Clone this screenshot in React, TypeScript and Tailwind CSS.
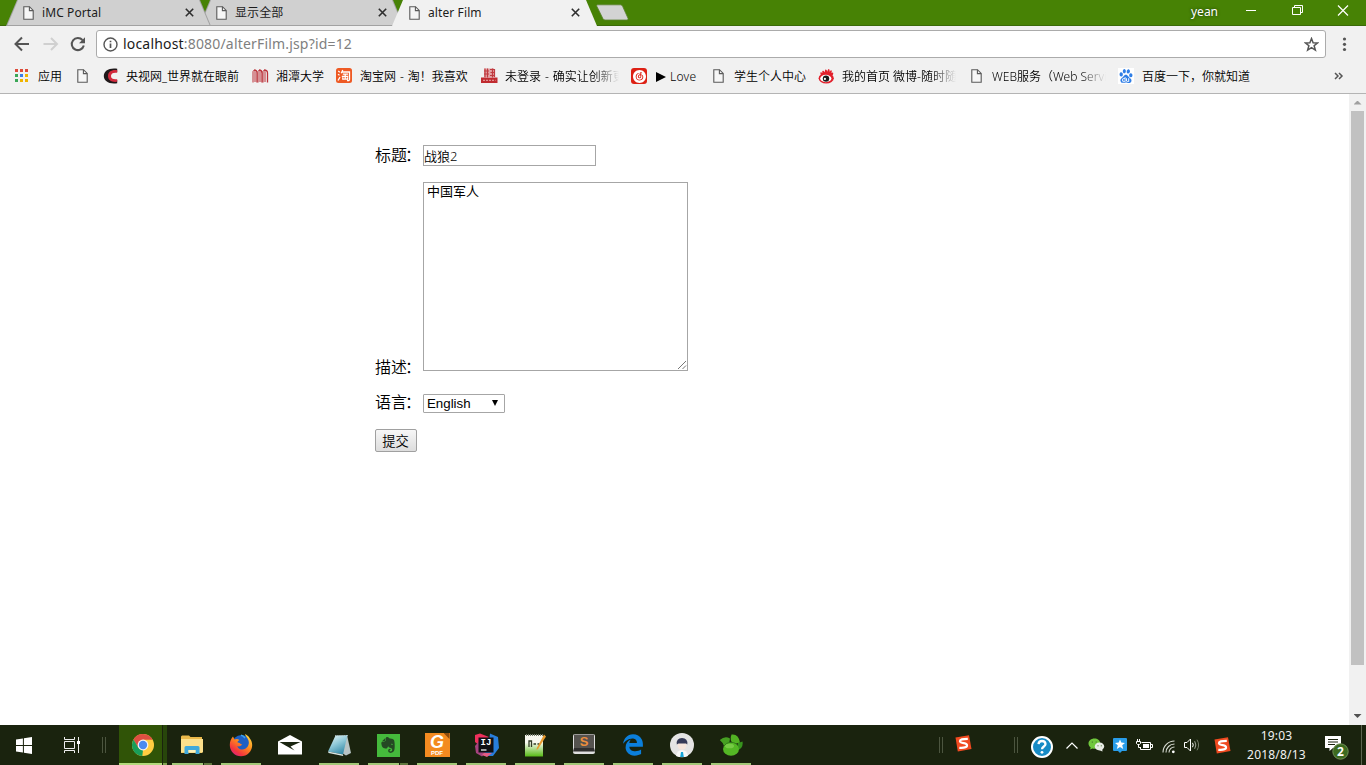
import React from "react";
import { FaEdgeLegacy, FaEvernote } from "react-icons/fa6";
import { SiBaidu, SiNeteasecloudmusic } from "react-icons/si";

type IconProps = { className?: string };

const DocIcon = ({ className = "" }: IconProps) => (
  <svg className={`shrink-0 ${className}`} width="11" height="14" viewBox="0 0 11 14" fill="#fff" stroke="#5a5a5a" strokeWidth="1.1">
    <path d="M.8 .7H6.5L10.2 4.4V13.3H.8Z" fill="#f6f6f6" />
    <path d="M6.4 .8V4.6H10.1" fill="none" />
  </svg>
);

const CloseIcon = () => (
  <svg width="9" height="9" viewBox="0 0 9 9" stroke="#2e2e2e" strokeWidth="1.6" className="shrink-0">
    <path d="M.8 .8 8.2 8.2M8.2 .8 .8 8.2" />
  </svg>
);

function Tab({ title, active = false, z }: { title: string; active?: boolean; z: string }) {
  return (
    <div className={`relative -mr-[12px] h-[26px] w-[205px] shrink-0 ${z}`}>
      <div
        className={`absolute inset-0 [clip-path:polygon(11px_0,194px_0,205px_100%,0_100%)] ${active ? "bg-[#f1f1f1]" : "bg-[#a2a2a2]"}`}
      />
      {!active && (
        <div className="absolute inset-x-0 top-0 h-[25px] bg-[#d0d0d0] [clip-path:polygon(12px_0,193px_0,203.5px_100%,1.5px_100%)]" />
      )}
      <div className="relative flex h-[25px] items-center pl-[17px] pr-[17px]">
        <DocIcon />
        <span className="ml-[8px] flex-1 whitespace-nowrap text-[12px] leading-[24px] tracking-[0.1px] text-[#1c1c1c]">{title}</span>
        <CloseIcon />
      </div>
    </div>
  );
}

const AppsIcon = () => (
  <svg width="14" height="14" viewBox="0 0 14 14" className="shrink-0">
    <path fill="#dd4b39" d="M0 0h3v3H0zM5 0h3v3H5zM10 0h3v3h-3z" />
    <path fill="#3aa757" d="M0 5h3v3H0z" />
    <path fill="#3b7de8" d="M5 5h3v3H5z" />
    <path fill="#f0b400" d="M10 5h3v3h-3zM5 10h3v3H5zM10 10h3v3h-3z" />
    <path fill="#3aa757" d="M0 10h3v3H0z" />
  </svg>
);

const CctvIcon = () => (
  <svg width="15" height="16" viewBox="0 0 15 16" className="shrink-0">
    <path d="M14.2 .8C6 -.4 .8 3 .8 8S6 16.4 14.2 15.2V12C9.8 12.8 6.5 11.4 6.3 8 6.5 4.6 9.8 3.2 14.2 4Z" fill="#20181a" />
    <path d="M14.2 2.2C8.5 1.5 5 3.9 5 8s3.500 6.500 9.200 5.800V11.200C10.200 11.700 8 10.500 8 8s2.200-3.700 6.200-3.200Z" fill="#d22a3d" />
  </svg>
);

const XtuIcon = () => (
  <svg width="17" height="14" viewBox="0 0 17 14" className="shrink-0" fill="none" stroke="#bb3038">
    <path d="M1 13.500V3C1 .8 3 .8 3 3V13M6 13.500V3C6 .8 8 .8 8 3V13M11 13.500V3C11 .8 13 .8 13 3V13" strokeWidth="1" />
    <path d="M2 1C4.500 1 5 2 5 4V13.500M7 1C9.500 1 10 2 10 4V13.500M12 1C14.700 1 15.500 2 15.500 4V13.500" strokeWidth="1.300" />
  </svg>
);

const TaobaoIcon = () => (
  <svg width="16" height="16" viewBox="0 0 16 16" className="shrink-0">
    <rect width="16" height="15" rx="2.500" fill="#ee5a24" />
    <g fill="none" stroke="#fff" strokeWidth="1.300">
      <path d="M2.200 3l1.600 1.200M2 6.200l1.500 1M2 12.500 4 9.200M6.800 2 5.200 5.200M6.200 4H13.500V11.500C13.500 12.800 12.500 12.700 11 12.500M6.800 6.200H12M5.800 8.300H12.200M9.200 6.200V11M6.800 9.300V11.200H11.500V9.300" />
    </g>
  </svg>
);

const RedSealIcon = () => (
  <svg width="17" height="16" viewBox="0 0 17 16" className="shrink-0">
    <path d="M0 9.500h16.500V15H0z" fill="#c02b30" />
    <path d="M3 .5h10v9H3z" fill="#e3a3a5" />
    <path d="M4 .5v9M3 3h5M3 6h5M6.500 .5v9M9 1.500h5M9.500 4.500h4M9 7.500h5M11.500 .5v9M13.500 1v8" stroke="#c03b40" strokeWidth="1.200" fill="none" />
    <path d="M2 12.300h12.500" stroke="#e9aaac" strokeDasharray="2 1" />
  </svg>
);

const NeteaseIcon = () => (
  <span className="flex size-[16px] shrink-0 items-center justify-center rounded-[3px] bg-[#dd2014] text-white">
    <SiNeteasecloudmusic size={13} />
  </span>
);

const WeiboIcon = () => (
  <svg width="17" height="16" viewBox="0 0 17 16" className="shrink-0">
    <path d="M3 7C1.500 4.500 2.500 3.500 4.500 5 3.500 2 5.500 2 7 4.300 6.500 .5 8.500 .5 9.300 3.800 10 -.3 12 .3 11.600 4 13 1.200 14.500 2.200 13.400 5 15.500 3.500 15.800 5.500 14.500 7.500L10 8Z" fill="#e2202c" />
    <ellipse cx="8.200" cy="10.300" rx="7.600" ry="5.200" fill="#e2202c" />
    <ellipse cx="7.800" cy="10.500" rx="5.600" ry="3.700" fill="#fff" />
    <circle cx="8" cy="10.600" r="3.200" fill="#1b1b1b" />
    <circle cx="6.900" cy="10.900" r="1.100" fill="#fff" />
  </svg>
);

const BaiduIcon = () => (
  <span className="flex size-[16px] shrink-0 items-center justify-center bg-white text-[#2f7ee6]">
    <SiBaidu size={14} />
  </span>
);

type Bookmark = { label?: string; icon: React.ReactNode; cell: string; gap?: string; fade?: boolean };

const bookmarks: Bookmark[] = [
  { label: "应用", icon: <AppsIcon />, cell: "w-[62px]", gap: "w-[23px]" },
  { icon: <DocIcon />, cell: "w-[26px]" },
  { label: "央视网_世界就在眼前", icon: <CctvIcon />, cell: "w-[149px]", gap: "w-[23px]" },
  { label: "湘潭大学", icon: <XtuIcon />, cell: "w-[84px]", gap: "w-[24px]" },
  { label: "淘宝网 - 淘！我喜欢", icon: <TaobaoIcon />, cell: "w-[145px]", gap: "w-[24px]" },
  { label: "未登录 - 确实让创新更", icon: <RedSealIcon />, cell: "w-[150px]", gap: "w-[24px]", fade: true },
  { label: "▶ Love", icon: <NeteaseIcon />, cell: "w-[82px]", gap: "w-[25px]" },
  { label: "学生个人中心", icon: <DocIcon />, cell: "w-[105px]", gap: "w-[21px]" },
  { label: "我的首页 微博-随时随地", icon: <WeiboIcon />, cell: "w-[153px]", gap: "w-[24px]", fade: true },
  { label: "WEB服务（Web Services", icon: <DocIcon />, cell: "w-[147px]", gap: "w-[21px]", fade: true },
  { label: "百度一下，你就知道", icon: <BaiduIcon />, cell: "w-[160px]", gap: "w-[24px]" },
];

function BookmarkLabel({ label, fade }: { label: string; fade?: boolean }) {
  if (label === "▶ Love")
    return (
      <span className="flex items-center gap-[4px] pt-[2px] text-[12px] text-black">
        <span className="h-[10px] w-[10px] bg-black [clip-path:polygon(0_0,100%_50%,0_100%)]" />
        <span className="tracking-[0.3px]">Love</span>
      </span>
    );
  return (
    <span
      className={`overflow-hidden whitespace-nowrap pt-[2px] text-[12px] text-black ${
        label.includes(" - ") ? "[word-spacing:0.8px]" : ""
      } ${fade ? "w-[114px] [mask-image:linear-gradient(to_right,#000_78%,transparent)]" : ""}`}
    >
      {label}
    </span>
  );
}

function Browser() {
  return (
    <header className="shrink-0">
      <div className="flex h-[26px] justify-between bg-[#478205] shadow-[inset_0_-1px_0_#3a6a08]">
        <div className="flex pl-[6px]">
          <Tab title="iMC Portal" z="z-20" />
          <Tab title="显示全部" z="z-10" />
          <Tab title="alter Film" z="z-30" active />
          <svg width="34" height="17" viewBox="0 0 34 17" className="ml-[11px] mt-[4px]">
            <path d="M1.500 .8H24.500Q26 .8 26.600 2.300L32 14.300Q32.600 16 31 16H9Q7.500 16 6.900 14.600L.8 2.200Q.2 .8 1.500 .8Z" fill="#d3d3d3" stroke="#5a8230" strokeWidth=".8" />
          </svg>
        </div>
        <div className="flex w-[176px] text-white">
          <span className="w-[56px] pl-[1px] pt-[4px] text-[12px] leading-[16px] [text-shadow:0_0_3px_#17300a]">yean</span>
          <svg width="110" height="20" viewBox="0 0 110 20" fill="none" stroke="#fff">
            <path d="M0 10.500H10" />
            <path d="M46.500 7.500H54.500V14.500H46.500ZM48.500 7.500V5.500H56.500V12.500H54.500" />
            <path d="M92 5.500 102 15.500M102 5.500 92 15.500" strokeWidth="1.200" />
          </svg>
        </div>
      </div>

      <div className="flex h-[36px] items-center bg-[#f1f1f1]">
        <svg width="96" height="36" viewBox="0 0 96 36" fill="none" stroke="#555" strokeWidth="2">
          <path d="M29 18H16M22 11.500 15.500 18 22 24.500" />
          <path d="M43.500 18H57M51 12 57 18 51 24" stroke="#d0d0d0" />
          <path d="M82.500 14A6.100 6.100 0 1 0 83.800 19.500" />
          <path d="M85 11.200V17.200H79Z" fill="#555" stroke="none" />
        </svg>
        <div className="flex h-[28px] w-[1230px] items-center rounded-[3px] border border-[#ababab] bg-white pl-[6px] pr-[6px]">
          <svg width="15" height="15" viewBox="0 0 15 15" fill="none" stroke="#555" strokeWidth="1.400">
            <circle cx="7.500" cy="7.500" r="6.500" />
            <path d="M7.500 6.500V11M7.500 3.700V5.300" strokeWidth="1.700" />
          </svg>
          <span className="ml-[5px] flex-1 whitespace-nowrap text-[14px] leading-[20px] tracking-[0.180px] text-[#808080]">
            <span className="text-[#1a1a1a]">localhost</span>:8080/alterFilm.jsp?id=12
          </span>
          <svg width="15" height="15" viewBox="0 0 16 16" fill="none" stroke="#555" strokeWidth="1.600">
            <path d="M8 1.700 9.700 6.100 14.500 6.300 10.800 9.300 12.100 14 8 11.300 3.900 14 5.200 9.300 1.500 6.300 6.300 6.100Z" />
          </svg>
        </div>
        <svg width="40" height="36" viewBox="0 0 40 36" fill="#555">
          <circle cx="18.500" cy="13" r="1.600" />
          <circle cx="18.500" cy="18.300" r="1.600" />
          <circle cx="18.500" cy="23.500" r="1.600" />
        </svg>
      </div>

      <div className="flex h-[32px] items-center border-b border-[#b4b4b4] bg-[#f1f1f1] pb-[3px] pl-[15px] font-[350]">
        {bookmarks.map((b, i) => (
          <div key={i} className={`flex shrink-0 items-center ${b.cell}`}>
            <span className={`flex shrink-0 ${b.gap ?? ""}`}>{b.icon}</span>
            {b.label && <BookmarkLabel label={b.label} fade={b.fade} />}
          </div>
        ))}
        <svg width="10" height="8" viewBox="0 0 10 8" className="ml-[56px]" fill="none" stroke="#555" strokeWidth="1.500">
          <path d="M1 1 4 4 1 7M5 1 8 4 5 7" />
        </svg>
      </div>
    </header>
  );
}

function Label({ children }: { children: string }) {
  return (
    <label className="flex w-[48px] shrink-0 whitespace-nowrap text-[16px] font-[350] leading-[20px] text-black">
      <span>{children}</span>
      <span className="-ml-[2px]">：</span>
    </label>
  );
}

function Page() {
  return (
    <main className="flex min-h-0 flex-1 bg-white">
      <form className="flex flex-1 flex-col items-start pl-[375px] pt-[51px]">
        <div className="flex h-[21px] items-start">
          <Label>标题</Label>
          <input className="h-[21px] w-[173px] border border-[#a6a6a6] bg-white px-0 text-[13px] font-[350] text-black" defaultValue="战狼2" />
        </div>
        <div className="relative mt-[16px] flex items-end">
          <div className="-mb-[6px]">
            <Label>描述</Label>
          </div>
          <textarea
            className="block h-[189px] w-[265px] resize-none border border-[#a6a6a6] bg-white px-[3px] py-0 text-[13px] leading-[17px] text-black"
            defaultValue="中国军人"
          />
          <svg width="10" height="10" viewBox="0 0 10 10" className="absolute bottom-[1px] right-[1px]" stroke="#777" fill="none">
            <path d="M1 9 9 1M5.500 9 9 5.500" />
          </svg>
        </div>
        <div className="relative mt-[23px] flex h-[19px] items-end">
          <div className="mb-px">
            <Label>语言</Label>
          </div>
          <select className="h-[19px] w-[82px] appearance-none rounded-[1px] border border-[#a6a6a6] bg-white pl-[3px] font-['Liberation_Sans',Arial,sans-serif] text-[13.3px] leading-[17px] text-black">
            <option>English</option>
          </select>
          <span className="absolute right-[7px] top-[6px] h-[6px] w-[6px] bg-black [clip-path:polygon(0_0,100%_0,50%_100%)]" />
        </div>
        <button
          type="button"
          className="mt-[16px] h-[23px] w-[42px] whitespace-nowrap rounded-[2px] border border-[#a0a0a0] bg-linear-to-b from-[#f7f7f7] to-[#dddddd] pr-[1px] text-[13.3px] font-[350] leading-[20px] text-black"
        >
          提交
        </button>
      </form>
      <div className="flex w-[17px] flex-col items-center bg-[#f1f1f1]">
        <div className="flex h-[17px] items-center">
          <span className="h-[4px] w-[8px] bg-[#a0a0a0] [clip-path:polygon(50%_0,100%_100%,0_100%)]" />
        </div>
        <div className="h-[554px] w-[13px] bg-[#c1c1c1]" />
        <div className="mt-auto flex h-[18px] items-center">
          <span className="h-[4px] w-[8px] bg-[#505050] [clip-path:polygon(0_0,100%_0,50%_100%)]" />
        </div>
      </div>
    </main>
  );
}

const ChromeIcon = () => (
  <svg width="24" height="24" viewBox="0 0 24 24" className="mt-[2px]">
    <circle cx="12" cy="12" r="11" fill="#ffcd41" />
    <path d="M12 12 7.200 14.700 2.500 6.400A11 11 0 0 1 21.700 6.700H12Z" fill="#dd4f42" />
    <path d="M2.500 6.400 7.400 14.800 12 17.200 11.300 23A11 11 0 0 1 2.500 6.400Z" fill="#199e59" />
    <circle cx="12" cy="12" r="5.400" fill="#f4f4f4" />
    <circle cx="12" cy="12" r="4.200" fill="#4a8bf0" />
  </svg>
);

const FolderIcon = () => (
  <svg width="24" height="22" viewBox="0 0 24 22">
    <path d="M1 2.500 2 1.500H9L10.500 3H22V19H1Z" fill="#e9b94b" />
    <path d="M1 5H23V18.500H1Z" fill="#fbe08c" />
    <path d="M4.500 20V13.500Q4.500 12 6 12H18Q19.500 12 19.500 13.500V20H15.500V16H8.500V20Z" fill="#3fa9dc" />
    <path d="M8.500 16h7v2.500h-7z" fill="#fdf0b9" />
  </svg>
);

const FirefoxIcon = () => (
  <svg width="24" height="24" viewBox="0 0 24 24">
    <defs>
      <linearGradient id="fox" x1=".9" y1="0" x2=".2" y2="1">
        <stop offset="0" stopColor="#ffe34a" />
        <stop offset=".45" stopColor="#ff8b1c" />
        <stop offset=".8" stopColor="#f3363d" />
        <stop offset="1" stopColor="#d92287" />
      </linearGradient>
    </defs>
    <circle cx="12.500" cy="11.500" r="9.500" fill="#1d5fc4" />
    <path d="M16 1C16.500 3.500 18.500 4.500 19.500 7.500 21 12 17.500 16.500 13.500 16.500 10 16.500 8.500 14.500 8.500 13 10 14 12 13 13.200 11.500 11.500 11.500 11 9.500 8.500 9.500 8.500 8 9.500 7.500 10.500 7 8.500 5.500 6.500 6 5.500 6.500L4 3.500C2 5.500 .8 8.500.8 12A11.200 11.200 0 0 0 23.200 12C23.200 9 22 6.800 20.500 5 20 3 17.500 2 16 1Z" fill="url(#fox)" />
    <path d="M12 2.200C14.500 2.500 15 4 16 5" stroke="#3aa4ee" strokeWidth="1.500" fill="none" />
  </svg>
);

const MailIcon = () => (
  <svg width="26" height="22" viewBox="0 0 26 22">
    <path d="M1 7.500 13 1 25 7.500V20.500H1Z" fill="#fff" />
    <path d="M2.500 8H23.500L13.500 12.500 17.500 16.500 8.500 11.500Z" fill="#1a2410" />
  </svg>
);

const NotepadIcon = () => (
  <svg width="25" height="24" viewBox="0 0 25 24">
    <defs>
      <linearGradient id="note" x1=".2" y1="0" x2=".7" y2="1">
        <stop offset="0" stopColor="#e2f3f3" />
        <stop offset=".45" stopColor="#8fc9d8" />
        <stop offset="1" stopColor="#2f86a4" />
      </linearGradient>
    </defs>
    <path d="M20 2 24 20 19 22.500 15 20Z" fill="#b7c4c5" />
    <path d="M8.500 2.500 20.500 2 16 21.500 1 18.500Z" fill="url(#note)" />
    <path d="M1 18.500 16 21.500 16.200 23 1.500 20Z" fill="#dbe6e3" />
    <path d="M8 2.500h13" stroke="#9ba9a7" strokeDasharray="1 1" />
  </svg>
);

const EvernoteIcon = () => (
  <span className="flex size-[23px] items-center justify-center bg-[#45ba3c] text-[#254824]">
    <FaEvernote size={18} />
  </span>
);

const FoxitIcon = () => (
  <span className="relative flex h-[24px] w-[25px] flex-col items-center bg-[#f38b20] font-['Liberation_Sans',sans-serif] font-bold text-white">
    <span className="mt-[1px] text-[18px] italic leading-[17px]">G</span>
    <span className="text-[6px] leading-[5px]">PDF</span>
    <span className="absolute right-0 top-0 size-[6px] bg-[#8f4c0c] [clip-path:polygon(0_0,100%_0,100%_100%)]" />
  </span>
);

const IdeaIcon = () => (
  <span className="relative flex size-[24px] items-center justify-center">
    <svg width="25" height="24" viewBox="0 0 25 24" className="absolute inset-0">
      <path d="M1 2 6 .5 15 4 6 13 1 9Z" fill="#ef315c" />
      <path d="M1 13 6 7 13 19 8 23.500 2 20Z" fill="#a7437f" />
      <path d="M16 .5 24 4 25 15 19 23 10 23 15 9Z" fill="#287edb" />
      <path d="M10 20 18 20 13 24 8 22Z" fill="#e65d85" />
      <path d="M4.500 4.500h15v15h-15z" fill="#101014" />
      <path d="M7 17h5.500" stroke="#fff" strokeWidth="1.200" />
    </svg>
    <span className="relative -top-[2px] font-['Liberation_Mono',monospace] text-[9px] font-bold leading-[9px] text-white">IJ</span>
  </span>
);

const NppIcon = () => (
  <svg width="22" height="25" viewBox="0 0 22 25">
    <defs>
      <linearGradient id="npp" x1="0" y1="0" x2="0" y2="1">
        <stop offset=".35" stopColor="#f7f8ef" />
        <stop offset="1" stopColor="#57ba15" />
      </linearGradient>
    </defs>
    <path d="M1 2H19V23.500H1Z" fill="url(#npp)" />
    <path d="M2 2h17" stroke="#788070" strokeWidth="2" strokeDasharray="1 1" />
    <path d="M5 14V8H7.500V14M9.500 11H12M13.500 11H15.500" stroke="#303a25" strokeWidth="1.300" fill="none" />
    <path d="M20 1.500 22 3.500 14 16 12.500 17 12.800 15Z" fill="#e99c31" />
  </svg>
);

const SublimeIcon = () => (
  <span className="relative -top-[1px] flex h-[22px] w-[24px] items-start justify-center">
    <svg width="24" height="22" viewBox="0 0 24 22" className="absolute inset-0">
      <rect x="1" y="1" width="22" height="20" rx="2" fill="#dedede" />
      <path d="M2 1.500H22V15H2Z" fill="#55534f" />
      <path d="M2 15 22 15 23 18.500H1Z" fill="#302f2e" />
    </svg>
    <span className="relative font-['Liberation_Sans',sans-serif] text-[13px] font-bold leading-[17px] text-[#ed8e3c]">S</span>
  </span>
);

const AvatarIcon = () => (
  <svg width="26" height="26" viewBox="0 0 26 26">
    <circle cx="13" cy="13" r="12" fill="#e4e4e4" />
    <path d="M7 24Q8 18 13 18T19 24Q13 26.500 7 24Z" fill="#f8f8f8" />
    <ellipse cx="13" cy="13" rx="4.500" ry="4.800" fill="#f6e5db" />
    <path d="M7.800 12.500Q7 6 13 6T18.300 12.500L17 11.500 9.500 11.500Z" fill="#353a57" />
    <path d="M12 20h2l.8 5h-3.600z" fill="#16a5d8" />
  </svg>
);

const NavicatIcon = () => (
  <svg width="24" height="24" viewBox="0 0 24 24">
    <path d="M.8 7Q6 2.500 11 5.500L10 11.500 5 13Q3.500 9 .8 7Z" fill="#469f22" />
    <path d="M12.500 1.500Q19.500 .5 21 9.500L14.500 11.500Q10 7 12.500 1.500Z" fill="#52b223" />
    <path d="M19 10 23.500 8.500Q24.500 15 19 17Z" fill="#37931d" />
    <ellipse cx="12" cy="16" rx="8" ry="6.800" fill="#54b725" />
    <ellipse cx="10.500" cy="13" rx="4.500" ry="2.300" fill="#8fd75b" opacity=".6" />
    <path d="M4.500 13.500Q10 6 18.500 11.500" stroke="#2b6f16" strokeWidth=".8" fill="none" />
  </svg>
);

const taskIcons: { icon: React.ReactNode; bar?: string }[] = [
  { icon: <FolderIcon />, bar: "stack" },
  { icon: <FirefoxIcon />, bar: "full" },
  { icon: <MailIcon /> },
  { icon: <NotepadIcon />, bar: "full" },
  { icon: <EvernoteIcon />, bar: "stack" },
  { icon: <FoxitIcon />, bar: "full" },
  { icon: <IdeaIcon />, bar: "full" },
  { icon: <NppIcon />, bar: "full" },
  { icon: <SublimeIcon />, bar: "full" },
  { icon: <FaEdgeLegacy size={22} color="#0b7fdc" />, bar: "full" },
  { icon: <AvatarIcon />, bar: "full" },
  { icon: <NavicatIcon />, bar: "full" },
];

const SogouIcon = () => (
  <svg width="17" height="17" viewBox="0 0 17 17" className="shrink-0">
    <path d="M.5 2.500 14 .3 16.500 14 2.800 16.500Z" fill="#f04a20" />
    <path d="M12.800 3.800Q4.800 3.800 5 6.200 5.400 7.600 8.800 8.200 12.400 8.900 12 10.900 11.300 13.200 4.300 12.800" fill="none" stroke="#fff" strokeWidth="2.300" />
  </svg>
);

const Grip = () => <span className="h-[16px] w-[4px] border-x border-[#4c553f]" />;

function Taskbar() {
  return (
    <footer className="flex h-[40px] shrink-0 bg-[#1a230e]">
      <div className="flex w-[119px] items-center">
        <svg width="17" height="17" viewBox="0 0 17 17" className="ml-[16px]" fill="#fff">
          <path d="M0 2.400 6.900 1.400V8H0ZM7.900 1.300 16 .1V8H7.900ZM0 9H6.900V15.600L0 14.600ZM7.900 9H16V16.900L7.900 15.700Z" />
        </svg>
        <svg width="17" height="16" viewBox="0 0 17 16" className="ml-[31px]" fill="none" stroke="#eee">
          <path d="M.5 0V2.500H10.500V0M.5 16V13.500H10.500V16M.5 4.500H10.500V11.500H.5ZM14.500 0V16" />
          <path d="M13 4h3v3h-3z" fill="#fff" stroke="none" />
        </svg>
        <span className="ml-[21px] flex">
          <Grip />
        </span>
      </div>
      <div className="flex w-[49px]">
        <div className="flex h-[40px] w-[43px] items-center justify-center border-b-2 border-[#b2da7c] bg-[#305407] pl-[5px]">
          <ChromeIcon />
        </div>
        <div className="ml-px h-[40px] w-[4px] border-b-2 border-[#80a352] bg-[#28460b]" />
      </div>
      {taskIcons.map((t, i) => (
        <div key={i} className="flex w-[49px] flex-col">
          <div className="flex h-[38px] w-[48px] items-center justify-center pt-[2px]">{t.icon}</div>
          {t.bar && (
            <div className="ml-[4px] flex h-[2px] w-[40px] bg-[#a2c878]">
              {t.bar === "stack" && <span className="ml-auto w-[9px] border-l border-[#1a230e] bg-[#61793f]" />}
            </div>
          )}
        </div>
      ))}
      <div className="ml-auto flex w-[427px] items-center">
        <Grip />
        <span className="-mt-[3px] ml-[12px]">
          <SogouIcon />
        </span>
        <span className="ml-[42px] flex">
          <Grip />
        </span>
        <svg width="24" height="24" viewBox="0 0 24 24" className="ml-[12px] mt-[3px]">
          <circle cx="12" cy="12" r="10" fill="#178bc5" stroke="#fff" strokeWidth="2" />
          <path d="M8.500 9.200Q8.800 6 12 6T15.500 9C15.500 11.500 12 11.500 12 14.300" fill="none" stroke="#fff" strokeWidth="2.300" />
          <circle cx="12" cy="17.300" r="1.400" fill="#fff" />
        </svg>
        <svg width="12" height="7" viewBox="0 0 12 7" className="ml-[12px]" fill="none" stroke="#fff" strokeWidth="1.200">
          <path d="M.5 6.500 6 1 11.500 6.500" />
        </svg>
        <svg width="17" height="14" viewBox="0 0 17 14" className="ml-[10px]">
          <path d="M6.500 .5C3 .5.500 2.700.500 5.500 .5 7.200 1.400 8.500 2.700 9.500L2 11.500 4.500 10.400C9.500 11.500 12.500 8.500 12.300 5.200 12 2.500 9.500.500 6.500.500Z" fill="#70c83d" />
          <path d="M11.500 4.500C8.700 4.500 6.700 6.300 6.700 8.500S9 12.600 12 12.400L14.500 13.500 14.300 11.700C18 9 16 4.500 11.500 4.500Z" fill="#e8ece6" />
          <path d="M4.300 3.500v1.200M8.200 3.500v1M10 7.300v1M13.300 7.300v1" stroke="#416c2b" />
        </svg>
        <svg width="14" height="15" viewBox="0 0 14 15" className="ml-[8px]">
          <path d="M1 0H13Q14 0 14 1V12Q14 13 13 13H9L7 15 5 13H1Q0 13 0 12V1Q0 0 1 0Z" fill="#299de9" />
          <path d="M7 1.500 8.300 4.500 12 5 9.200 7.300 10.200 11 7 9 3.800 11 4.800 7.300 2 5 5.700 4.500Z" fill="#fff" />
        </svg>
        <svg width="18" height="12" viewBox="0 0 18 12" className="ml-[9px]" fill="none" stroke="#fff">
          <path d="M5.500 3.500H14.500V10.500H4.500V8M15 5.500H16.500V8.500H15M1.500 0V2M3.500 0V2M.5 2.500H4.500V4.500L3.500 5.500H1.500L.5 4.500ZM2.500 5.500V8.500H5" />
          <path d="M7 5h6v4H7z" fill="#fff" stroke="none" />
        </svg>
        <svg width="14" height="14" viewBox="0 0 14 14" className="ml-[8px] mt-[3px]" fill="none" stroke="#d8dcd3" strokeWidth="1.100">
          <path d="M1 12.500A11.500 11.500 0 0 1 12.500 1M4 12.500A8.500 8.500 0 0 1 12.500 4M7 12.500A5.500 5.500 0 0 1 12.500 7" />
          <circle cx="11.300" cy="11.800" r="1.400" fill="#fff" stroke="none" />
        </svg>
        <svg width="17" height="14" viewBox="0 0 17 14" className="ml-[8px]" fill="none" stroke="#fff">
          <path d="M.5 4.500H3L6.500 1V13L3 9.500H.5Z" />
          <path d="M8.500 4.800Q10 7 8.500 9.200" />
          <path d="M10.700 3.200Q13 7 10.700 10.800" stroke="#a4a99d" />
          <path d="M13 1.700Q16.200 7 13 12.300" stroke="#747b6a" />
        </svg>
        <span className="ml-[13px]">
          <SogouIcon />
        </span>
        <div className="ml-[12px] w-[67px] text-center text-[12px] leading-[19px] tracking-[0.2px] text-[#f2f2f2]">
          <div>19:03</div>
          <div className="whitespace-nowrap">2018/8/13</div>
        </div>
        <span className="relative ml-[14px] mt-[4px] h-[26px] w-[26px]">
          <svg width="26" height="26" viewBox="0 0 26 26">
            <path d="M1 2H17V14H9L5.500 17V14H1Z" fill="#fff" />
            <path d="M4 5.500H14M4 8H14M4 10.500H11" stroke="#1a230e" />
            <circle cx="16.500" cy="17.500" r="7.700" fill="#3d6b20" stroke="#719158" />
          </svg>
          <span className="absolute left-[13px] top-[11px] font-['Noto_Sans',sans-serif] text-[12px] font-bold leading-[13px] text-white">2</span>
        </span>
        <span className="ml-auto mr-[4px] h-[40px] w-px bg-[#5c6450]" />
      </div>
    </footer>
  );
}

export default function App() {
  return (
    <div className="flex h-[765px] w-[1366px] flex-col overflow-hidden bg-white font-['Noto_Sans','Noto_Sans_CJK_SC',sans-serif]">
      <Browser />
      <Page />
      <Taskbar />
    </div>
  );
}
